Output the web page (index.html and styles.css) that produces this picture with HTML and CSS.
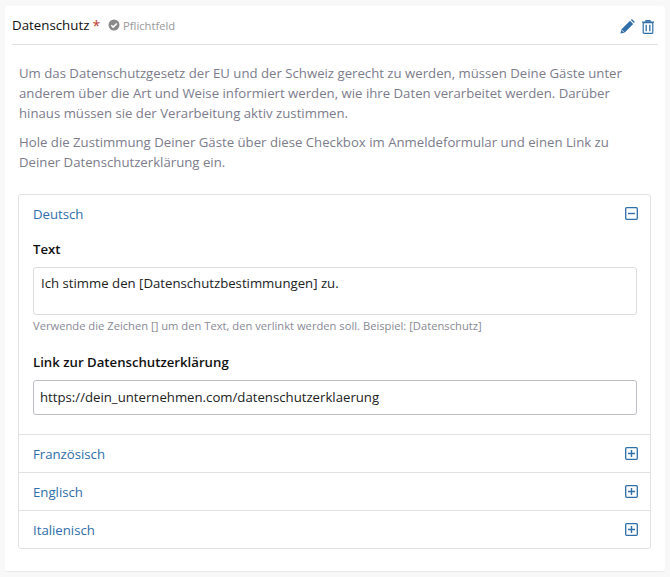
FILE: index.html
```html
<!DOCTYPE html>
<html lang="de">
<head>
<meta charset="utf-8">
<title>Datenschutz</title>
<link rel="stylesheet" href="styles.css">
</head>
<body>
<section class="card">
  <header class="head">
    <div class="head-left">
      <span class="title">Datenschutz</span>
      <span class="star">*</span>
      <svg class="check" viewBox="0 0 12 12" width="12" height="12"><circle cx="6" cy="6" r="5.5" fill="#8a8a8a"/><path d="M3.3 6.2l1.9 1.9 3.6-3.7" fill="none" stroke="#fff" stroke-width="1.5"/></svg>
      <span class="req">Pflichtfeld</span>
    </div>
    <div class="head-icons">
      <svg viewBox="0 0 15 15" width="15" height="15"><path d="M0.5 14.5l0.8-4L10 1.8l3.2 3.2-8.7 8.7z" fill="#2f6ea8"/><path d="M10.9 1l1-1 3 3-1 1z" fill="#2f6ea8"/><path d="M1.3 10.6l3.1 3.1" stroke="#fff" stroke-width=".8"/></svg>
      <svg viewBox="0 0 12 14" width="12" height="14"><path d="M0 2.2h12M4 2V.6h4V2" fill="none" stroke="#2f6ea8" stroke-width="1.2"/><rect x="1.2" y="2.6" width="9.6" height="10.8" rx="1" fill="none" stroke="#2f6ea8" stroke-width="1.2"/><path d="M4.2 4.8v6.4M7.8 4.8v6.4" stroke="#2f6ea8" stroke-width="1.3"/></svg>
    </div>
  </header>
  <div class="intro">
    <p>Um das Datenschutzgesetz der EU und der Schweiz gerecht zu werden, müssen Deine Gäste unter anderem über die Art und Weise informiert werden, wie ihre Daten verarbeitet werden. Darüber hinaus müssen sie der Verarbeitung aktiv zustimmen.</p>
    <p>Hole die Zustimmung Deiner Gäste über diese Checkbox im Anmeldeformular und einen Link zu Deiner Datenschutzerklärung ein.</p>
  </div>
  <div class="accordion">
    <div class="acc-head"><span>Deutsch</span>
      <svg class="tog" viewBox="0 0 13 13" width="13" height="13"><rect x=".7" y=".7" width="11.6" height="11.6" rx="1" fill="none" stroke="#2f6ea8" stroke-width="1.3"/><path d="M3 6.5h7" stroke="#2f6ea8" stroke-width="1.4"/></svg>
    </div>
    <div class="acc-body">
      <label class="lbl">Text</label>
      <div class="textarea">Ich stimme den [Datenschutzbestimmungen] zu.</div>
      <p class="hint">Verwende die Zeichen [] um den Text, den verlinkt werden soll. Beispiel: [Datenschutz]</p>
      <label class="lbl lbl2">Link zur Datenschutzerklärung</label>
      <div class="input">https://dein_unternehmen.com/datenschutzerklaerung</div>
    </div>
    <div class="acc-head bordered"><span>Französisch</span>
      <svg class="tog" viewBox="0 0 13 13" width="13" height="13"><rect x=".7" y=".7" width="11.6" height="11.6" rx="1" fill="none" stroke="#2f6ea8" stroke-width="1.3"/><path d="M3 6.5h7M6.5 3v7" stroke="#2f6ea8" stroke-width="1.4"/></svg>
    </div>
    <div class="acc-head bordered"><span>Englisch</span>
      <svg class="tog" viewBox="0 0 13 13" width="13" height="13"><rect x=".7" y=".7" width="11.6" height="11.6" rx="1" fill="none" stroke="#2f6ea8" stroke-width="1.3"/><path d="M3 6.5h7M6.5 3v7" stroke="#2f6ea8" stroke-width="1.4"/></svg>
    </div>
    <div class="acc-head bordered"><span>Italienisch</span>
      <svg class="tog" viewBox="0 0 13 13" width="13" height="13"><rect x=".7" y=".7" width="11.6" height="11.6" rx="1" fill="none" stroke="#2f6ea8" stroke-width="1.3"/><path d="M3 6.5h7M6.5 3v7" stroke="#2f6ea8" stroke-width="1.4"/></svg>
    </div>
  </div>
</section>
</body>
</html>
```
FILE: styles.css
```css
* { box-sizing: border-box; }
html, body { margin: 0; padding: 0; }
body {
  width: 670px;
  height: 577px;
  overflow: hidden;
  background: #f8f8f8;
  font-family: "Open Sans", "Noto Sans", sans-serif;
  color: #111;
  padding: 6px 5px 0 5px;
}
.card {
  width: 660px;
  height: 566px;
  background: #fff;
  border-bottom: 1px solid #e9e9e9;
  border-radius: 3px;
  padding: 0 7px 0 7px;
}
.head {
  height: 39px;
  border-bottom: 1px solid #dfdfdf;
  display: flex;
  align-items: center;
  justify-content: space-between;
  padding-right: 4px;
}
.head-left { display: flex; align-items: center; }
.title { font-size: 13.3px; }
.star { color: #c0392b; font-size: 14px; margin-left: 3px; }
.check { margin-left: 8px; }
.req { font-size: 11.2px; color: #999; margin-left: 3px; }
.head-icons { display: flex; align-items: center; gap: 7px; margin-top: 3px; }
.intro { padding: 18px 7px 0 7px; color: #7c7c8c; font-size: 13.2px; line-height: 20px; }
.intro p { margin: 0 0 9px; }
.accordion {
  margin: 22px 1px 0 6px;
  width: 633px;
  border: 1px solid #e2e2e2;
  border-radius: 3px;
}
.acc-head {
  height: 37px;
  display: flex;
  align-items: center;
  justify-content: space-between;
  padding: 0 12px 0 14px;
  color: #2f6ea8;
  font-size: 13.2px;
}
.acc-head.bordered { height: 38px; border-top: 1px solid #e2e2e2; }
.acc-body { padding: 7px 13px 19px 14px; }
.lbl { display: block; font-size: 13.2px; font-weight: 600; line-height: 20px; }
.textarea {
  margin-top: 8px;
  height: 48px;
  border: 1px solid #ddd;
  border-radius: 3px;
  padding: 5px 7px;
  font-size: 13.2px;
  line-height: 20px;
  color: #222;
}
.hint { margin: 3px 0 0; font-size: 11.2px; line-height: 16px; color: #8a8a96; }
.lbl2 { margin-top: 18px; }
.input {
  margin-top: 8px;
  height: 35px;
  border: 1px solid #bdbdc4;
  border-radius: 3px;
  padding: 6px 6px;
  font-size: 13.2px;
  line-height: 20px;
  color: #222;
}
```
